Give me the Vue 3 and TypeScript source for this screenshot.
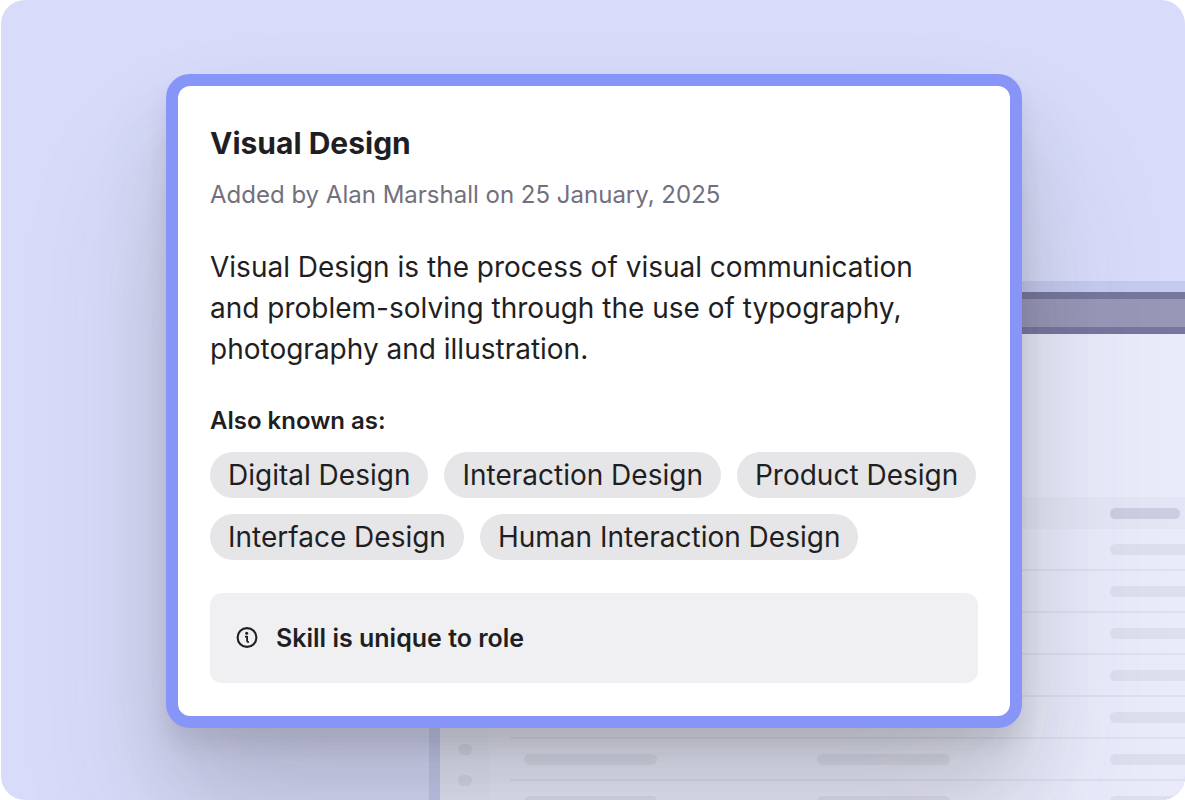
<script setup lang="ts">
interface Skill {
  name: string
  meta: string
  description: string
  aliases: string[]
  notice: string
}

const skill: Skill = {
  name: 'Visual Design',
  meta: 'Added by Alan Marshall on 25 January, 2025',
  description:
    'Visual Design is the process of visual communication and problem-solving through the use of typography, photography and illustration.',
  aliases: [
    'Digital Design',
    'Interaction Design',
    'Product Design',
    'Interface Design',
    'Human Interaction Design',
  ],
  notice: 'Skill is unique to role',
}

const navDots = 15
const tableRows = 7
</script>

<template>
  <main class="stage">
    <div class="window" aria-hidden="true">
      <div class="window-bar"></div>
      <div class="window-body">
        <div class="nav">
          <span v-for="n in navDots" :key="n" class="dot"></span>
        </div>
        <div class="sheet">
          <div class="row head">
            <span class="bar"></span><span class="bar"></span><span class="bar"></span>
          </div>
          <div v-for="n in tableRows" :key="n" class="row">
            <span class="bar"></span><span class="bar"></span><span class="bar"></span>
          </div>
        </div>
      </div>
    </div>

    <article class="card">
      <h1 class="title">{{ skill.name }}</h1>
      <p class="meta">{{ skill.meta }}</p>
      <p class="description">{{ skill.description }}</p>
      <h2 class="label">Also known as:</h2>
      <ul class="tags">
        <li v-for="alias in skill.aliases" :key="alias" class="tag">{{ alias }}</li>
      </ul>
      <div class="notice">
        <svg class="icon" viewBox="0 0 22 22" fill="none" aria-hidden="true">
          <circle cx="11" cy="10.5" r="9.4" stroke="currentColor" stroke-width="2.1" />
          <circle cx="10.7" cy="6.3" r="1.5" fill="currentColor" />
          <path d="M9 9.6h2.1v4.6q0 .8 1.8 .8" stroke="currentColor" stroke-width="1.8" stroke-linejoin="round" />
        </svg>
        <span>{{ skill.notice }}</span>
      </div>
    </article>
  </main>
</template>

<style>
body {
  margin: 0;
  background: #fff;
}
</style>

<style scoped>
.stage {
  display: grid;
  grid-template-columns: minmax(0, 1fr);
  grid-template-rows: minmax(0, 1fr);
  height: 100vh;
  margin-left: 1px;
  overflow: hidden;
  border-radius: 24px;
  background: #d8dcfa;
  color: #1f1f23;
  font-family: Inter, 'Liberation Sans', sans-serif;
}

.window,
.card {
  grid-area: 1 / 1;
}

.window {
  display: flex;
  flex-direction: column;
  margin: 281px 0 0 428px;
  padding: 11px 0 0 11px;
  overflow: hidden;
  background: #c5caf0;
}

.window-bar {
  flex: none;
  box-sizing: border-box;
  height: 42px;
  border: solid #77769d;
  border-width: 7px 0;
  background: #9797b8;
}

.window-body {
  display: flex;
  flex: 1;
  min-height: 0;
  background: #e9ebfb;
}

.nav {
  display: flex;
  flex: none;
  flex-direction: column;
  gap: 20px;
  box-sizing: border-box;
  width: 49px;
  padding: 7px 0 0 18px;
  background: #e6e8f8;
}

.dot {
  flex: none;
  width: 14px;
  height: 11px;
  border-radius: 6px;
  background: #d9dbea;
}

.sheet {
  flex: 1;
  min-width: 0;
  padding: 163px 0 0 21px;
  overflow: hidden;
}

.row {
  display: flex;
  align-items: center;
  gap: 160px;
  box-sizing: border-box;
  height: 42px;
  padding-left: 14px;
  border-bottom: 2px solid #dee0f0;
}

.head {
  height: 32px;
  border: 0;
  background: #e4e6f6;
}

.bar {
  flex: none;
  width: 133px;
  height: 11px;
  border-radius: 6px;
  background: #dddfee;
}

.head .bar {
  width: 70px;
  margin-right: 63px;
  background: #cbcde1;
}

.card {
  position: relative;
  align-self: start;
  margin: 74px 163px 0 165px;
  padding: 37px 32px 33px;
  border: 12px solid #8795f8;
  border-radius: 24px;
  background: #fff;
  background-clip: padding-box;
  box-shadow:
    0 16px 20px rgba(60, 60, 60, 0.1),
    0 48px 72px rgba(60, 60, 60, 0.14),
    0 100px 150px rgba(60, 60, 70, 0.15);
}

.title {
  margin: 0;
  font-size: 30px;
  font-weight: 700;
  line-height: 40px;
}

.meta {
  margin: 15px 0 0;
  color: #72707e;
  font-size: 24px;
  line-height: 34px;
}

.description {
  max-width: 740px;
  margin: 35px 0 0;
  font-size: 28px;
  line-height: 41px;
}

.label {
  margin: 34px 0 0;
  font-size: 24px;
  font-weight: 600;
  line-height: 34px;
}

.tags {
  display: flex;
  flex-wrap: wrap;
  gap: 16px;
  margin: 14px 0 0;
  padding: 0;
  list-style: none;
}

.tag {
  padding: 0 18px;
  border-radius: 23px;
  background: #e6e6e8;
  font-size: 28px;
  line-height: 46px;
}

.notice {
  display: flex;
  align-items: center;
  gap: 18px;
  margin-top: 33px;
  padding: 28px 26px;
  border-radius: 12px;
  background: #f0f0f2;
  font-size: 25px;
  font-weight: 600;
  line-height: 34px;
}

.icon {
  flex: none;
  width: 22px;
  height: 22px;
}
</style>
